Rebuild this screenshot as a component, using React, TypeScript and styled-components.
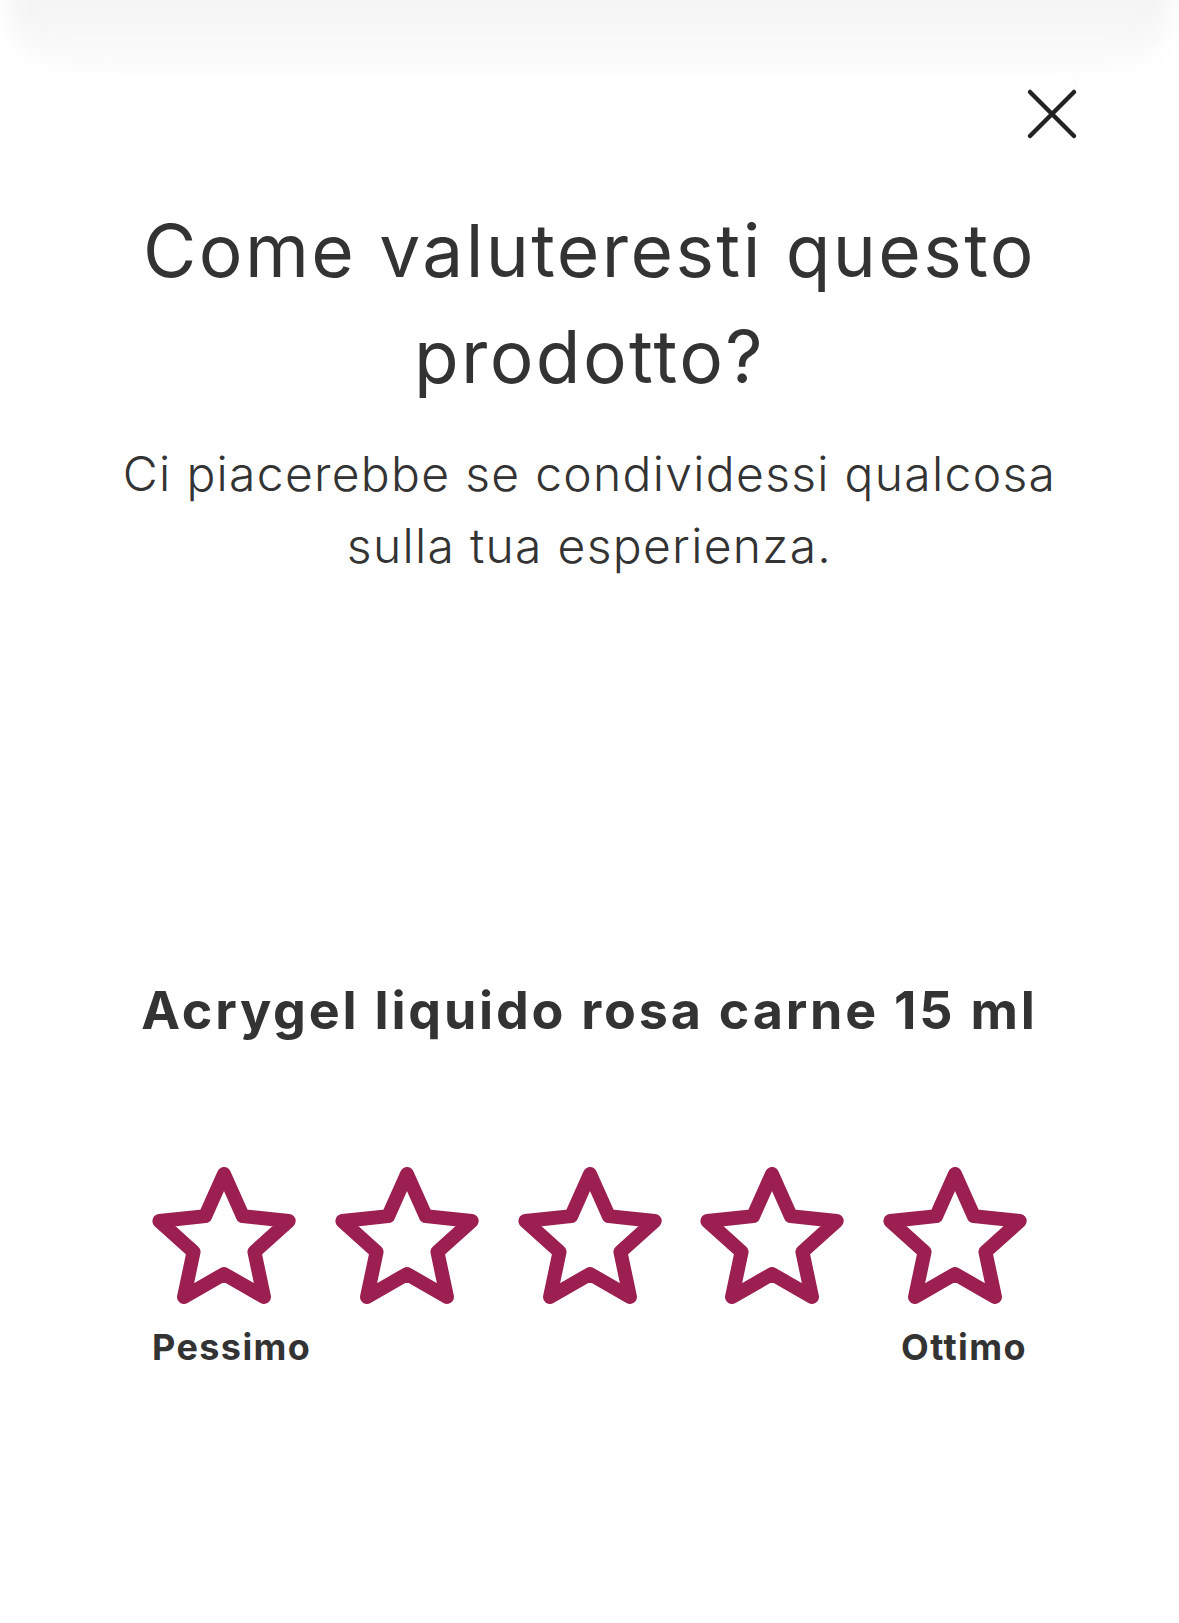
import React, { useState } from "react";
import styled, { createGlobalStyle } from "styled-components";

const GlobalStyle = createGlobalStyle`
  html, body {
    margin: 0;
    padding: 0;
    background: #ffffff;
    overflow: hidden;
  }
  body {
    font-family: Inter, "Noto Sans", sans-serif;
    color: #333333;
  }
`;

const labels = ["Pessimo", "", "", "", "Ottimo"];

function StarIcon({ filled }: { filled: boolean }) {
  // regular five point star, outer radius 68, inner radius 32
  const points: string[] = [];
  for (let i = 0; i < 10; i++) {
    const r = i % 2 === 0 ? 68 : 32;
    const a = (-90 + i * 36) * (Math.PI / 180);
    points.push(`${(r * Math.cos(a)).toFixed(2)},${(r * Math.sin(a)).toFixed(2)}`);
  }
  return (
    <svg width="144" height="138" viewBox="-72 -75 144 138">
      <polygon
        points={points.join(" ")}
        fill={filled ? "#9b1f50" : "none"}
        stroke="#9b1f50"
        strokeWidth="14"
        strokeLinejoin="round"
      />
    </svg>
  );
}

export default function App() {
  const [rating, setRating] = useState(0);

  return (
    <Page>
      <GlobalStyle />
      <TopShade />
      <Header>
        <CloseButton aria-label="Chiudi">
          <svg width="52" height="52" viewBox="0 0 52 52">
            <path
              d="M4 4 L48 48 M48 4 L4 48"
              stroke="#222222"
              strokeWidth="4.5"
              strokeLinecap="round"
            />
          </svg>
        </CloseButton>
      </Header>
      <Title>
        Come valuteresti questo
        <br />
        prodotto?
      </Title>
      <Subtitle>
        Ci piacerebbe se condividessi qualcosa
        <br />
        sulla tua esperienza.
      </Subtitle>
      <ProductName>Acrygel liquido rosa carne 15 ml</ProductName>
      <Rating>
        <StarRow>
          {labels.map((_, i) => (
            <StarButton key={i} onClick={() => setRating(i + 1)}>
              <StarIcon filled={i < rating} />
            </StarButton>
          ))}
        </StarRow>
        <LabelRow>
          <Label>Pessimo</Label>
          <Label>Ottimo</Label>
        </LabelRow>
      </Rating>
    </Page>
  );
}

const Page = styled.div`
  width: 1179px;
  min-height: 1623px;
  display: flex;
  flex-direction: column;
  align-items: center;
  background: #ffffff;
`;

const TopShade = styled.div`
  align-self: stretch;
  height: 72px;
  margin: -20px 10px 0;
  padding-top: 20px;
  border-radius: 0 0 90px 90px / 0 0 50px 50px;
  background: linear-gradient(to bottom, #f2f2f2 0%, #f7f7f7 50%, #fcfcfc 100%);
  filter: blur(10px);
`;

const Header = styled.div`
  align-self: stretch;
  display: flex;
  justify-content: flex-end;
  padding: 16px 101px 0 0;
  height: 52px;
`;

const CloseButton = styled.button`
  width: 52px;
  height: 52px;
  padding: 0;
  border: none;
  background: none;
  cursor: pointer;
  display: flex;
`;

const Title = styled.h1`
  margin: 58px 0 0;
  font-size: 73px;
  line-height: 106px;
  font-weight: 400;
  letter-spacing: 2.4px;
  text-align: center;
  color: #333333;
`;

const Subtitle = styled.p`
  margin: 28px 0 0;
  font-size: 48px;
  line-height: 72px;
  font-weight: 300;
  letter-spacing: 1.3px;
  text-align: center;
  color: #333333;
`;

const ProductName = styled.h2`
  margin: 398px 0 0;
  font-size: 52px;
  line-height: 62px;
  font-weight: 700;
  letter-spacing: 2.8px;
  text-align: center;
  color: #333333;
`;

const Rating = styled.div`
  margin-top: 125px;
  width: 875px;
  display: flex;
  flex-direction: column;
`;

const StarRow = styled.div`
  display: flex;
  justify-content: space-between;
`;

const StarButton = styled.button`
  padding: 0;
  border: none;
  background: none;
  cursor: pointer;
  display: flex;
`;

const LabelRow = styled.div`
  margin-top: 21px;
  display: flex;
  justify-content: space-between;
`;

const Label = styled.span`
  font-size: 36px;
  line-height: 42px;
  font-weight: 700;
  letter-spacing: 1.4px;
  color: #333333;
`;
